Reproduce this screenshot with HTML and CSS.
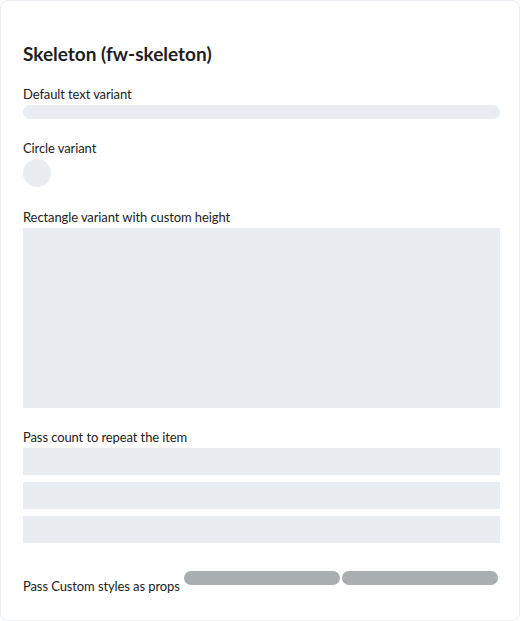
FILE: index.html
```html
<!DOCTYPE html>
<html>
<head>
<meta charset="utf-8">
<link rel="stylesheet" href="styles.css">
</head>
<body>
<div class="card">
  <h2 class="title">Skeleton (fw-skeleton)</h2>
  <div class="label">Default text variant</div>
  <div class="sk sk-text"></div>
  <div class="label gap">Circle variant</div>
  <div class="sk sk-circle"></div>
  <div class="label gap gap-lg">Rectangle variant with custom height</div>
  <div class="sk sk-rect"></div>
  <div class="label gap">Pass count to repeat the item</div>
  <div class="sk sk-row"></div>
  <div class="sk sk-row"></div>
  <div class="sk sk-row"></div>
  <div class="custom">Pass Custom styles as props <span class="sk sk-dark"></span><span class="sk sk-dark"></span></div>
</div>
</body>
</html>
```
FILE: styles.css
```css
html, body {
  margin: 0;
  padding: 0;
  background: #ffffff;
}
body {
  font-family: "Lato", "Inter", sans-serif;
  color: #222222;
}
.card {
  box-sizing: border-box;
  width: 520px;
  height: 621px;
  border: 1px solid #ebeff3;
  border-radius: 8px;
  padding: 41px 19px 0 22px;
}
.title {
  margin: 0 0 20px;
  font-size: 19px;
  line-height: 24px;
  font-weight: 700;
  color: #1f1f1f;
}
.label {
  font-size: 13px;
  line-height: 16px;
  letter-spacing: -0.1px;
  color: #222222;
  margin-bottom: 3px;
}
.label.gap {
  margin-top: 21px;
}
.label.gap-lg {
  margin-top: 22px;
}
.sk {
  background: #e9ecf0;
}
.sk-text {
  height: 14px;
  border-radius: 7px;
}
.sk-circle {
  width: 28px;
  height: 28px;
  border-radius: 50%;
}
.sk-rect {
  height: 180px;
}
.sk-row {
  height: 27px;
  margin-bottom: 7px;
}
.custom {
  margin-top: 28px;
  font-size: 13px;
  line-height: 16px;
  letter-spacing: -0.1px;
  color: #222222;
  white-space: nowrap;
}
.sk-dark {
  display: inline-block;
  width: 156px;
  height: 14px;
  border-radius: 7px;
  background: #a9aeb1;
  margin-bottom: 6px;
  margin-left: 1px;
  vertical-align: baseline;
}
.sk-dark + .sk-dark {
  margin-left: 2px;
}
```
